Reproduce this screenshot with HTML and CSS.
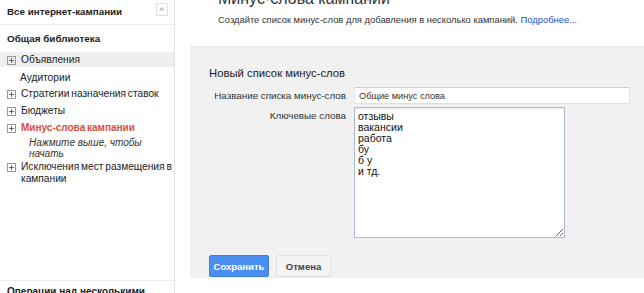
FILE: index.html
```html
<!DOCTYPE html>
<html lang="ru">
<head>
    <meta charset="utf-8">
    <title>Минус-слова кампании</title>
    <link rel="stylesheet" href="styles.css">
</head>
<body>
    <div class="sidebar">
        <div class="sideTop">
            <span class="sideTitle">Все интернет-кампании</span>
            <span class="collapse">&laquo;</span>
        </div>
        <div class="libTitle">Общая библиотека</div>
        <ul class="libList">
            <li class="selected"><span class="plus"></span>Объявления</li>
            <li class="noPlus">Аудитории</li>
            <li><span class="plus"></span>Стратегии назначения ставок</li>
            <li><span class="plus"></span>Бюджеты</li>
            <li class="active"><span class="plus"></span>Минус-слова кампании</li>
            <li class="hint">Нажмите выше, чтобы начать</li>
            <li><span class="plus"></span>Исключения мест размещения в кампании</li>
        </ul>
        <div class="sideBottom">Операции над несколькими</div>
    </div>
    <div class="main">
        <h2 class="pageTitle">Минус-слова кампании</h2>
        <p class="intro">Создайте список минус-слов для добавления в несколько кампаний. <a href="#">Подробнее...</a></p>
        <div class="panel">
            <h3 class="panelTitle">Новый список минус-слов</h3>
            <div class="formRow">
                <label>Название списка минус-слов</label>
                <input type="text" class="nameInput" value="Общие минус слова">
            </div>
            <div class="formRow">
                <label>Ключевые слова</label>
                <textarea class="words">отзывы
вакансии
работа
бу
б у
и тд.</textarea>
            </div>
            <div class="buttons">
                <button class="saveButton">Сохранить</button>
                <button class="cancelButton">Отмена</button>
            </div>
        </div>
    </div>
</body>
</html>
```

FILE: styles.css
```css
body{
    margin: 0;
    padding: 0;
    font-family: "Liberation Sans", Arial, Helvetica, sans-serif;
    font-size: 10px;
    color: #222;
    display: flex;
    height: 293px;
    overflow: hidden;
    background-color: white;
}
.sidebar{
    width: 174px;
    flex-shrink: 0;
    border-right: 1px solid #e3e3e3;
    display: flex;
    flex-direction: column;
}
.sideTop{
    display: flex;
    justify-content: space-between;
    align-items: center;
    height: 25px;
    padding: 0 6px 0 7px;
    border-bottom: 1px solid #ececec;
    box-sizing: border-box;
}
.sideTitle{
    font-weight: bold;
    font-size: 9.8px;
    margin-top: -1px;
}
.collapse{
    width: 10px;
    height: 11px;
    border: 1px solid #e0e0e0;
    color: #999;
    font-size: 9px;
    line-height: 10px;
    text-align: center;
    margin-top: -6px;
}
.libTitle{
    font-weight: bold;
    font-size: 9.9px;
    padding: 8px 7px 0 7px;
}
.libList{
    list-style: none;
    margin: 8px 0 0 0;
    padding: 0;
}
.libList li{
    display: flex;
    align-items: flex-start;
    padding: 2px 0 1px 7px;
    line-height: 12px;
    font-size: 10.2px;
    word-spacing: -1px;
    margin-bottom: 2px;
}
.libList li.selected{
    background-color: #efefef;
}
.libList li.noPlus{
    padding-left: 20px;
    padding-top: 3px;
    padding-bottom: 0;
}
.libList li.active{
    color: #dd4b39;
    font-weight: bold;
    font-size: 10px;
    margin-bottom: 0;
}
.libList li.hint{
    font-style: italic;
    padding: 2px 30px 0 29px;
    line-height: 11px;
    color: #333;
    font-size: 10px;
    word-spacing: 0;
    margin-bottom: 0;
}
.plus{
    flex-shrink: 0;
    position: relative;
    width: 7px;
    height: 7px;
    border: 1px solid #999;
    margin: 2px 5px 0 0;
}
.plus::before, .plus::after{
    content: "";
    position: absolute;
    background-color: #666;
}
.plus::before{
    left: 1px;
    top: 3px;
    width: 5px;
    height: 1px;
}
.plus::after{
    left: 3px;
    top: 1px;
    width: 1px;
    height: 5px;
}
.sideBottom{
    margin-top: auto;
    border-top: 1px solid #ececec;
    padding: 5px 7px 0 7px;
    font-weight: bold;
    font-size: 10px;
    height: 12px;
    margin-bottom: -5px;
}
.main{
    flex: 1;
    padding-left: 15px;
    min-width: 0;
}
.pageTitle{
    font-size: 16px;
    font-weight: normal;
    margin: -10px 0 0 28px;
    color: #333;
}
.intro{
    margin: 6px 0 0 28px;
    font-size: 9.4px;
    color: #333;
}
.intro a{
    color: #1155cc;
    text-decoration: none;
}
.panel{
    margin-top: 21px;
    background-color: #f1f1f1;
    border-top: 1px solid #e6e6e6;
    padding: 20px 0 14px 19px;
    height: 232px;
    box-sizing: border-box;
}
.panelTitle{
    font-size: 11.3px;
    font-weight: normal;
    color: #222;
    margin: 0 0 8px 0;
}
.formRow{
    display: flex;
    align-items: flex-start;
    margin-bottom: 3px;
}
.formRow label{
    width: 137px;
    white-space: nowrap;
    text-align: right;
    padding-right: 8px;
    font-size: 9.8px;
    color: #333;
    padding-top: 3px;
}
.nameInput{
    width: 276px;
    height: 17px;
    box-sizing: border-box;
    border: 1px solid #e0e0e0;
    border-top-color: #cfcfcf;
    font-family: "Liberation Sans", Arial, sans-serif;
    font-size: 9.2px;
    padding: 0 4px;
    color: #333;
    margin: 0;
}
.words{
    width: 211px;
    height: 131px;
    box-sizing: border-box;
    border: 1px solid #a8bad6;
    box-shadow: inset 0 1px 2px rgba(0, 0, 0, 0.08);
    font-family: "Liberation Sans", Arial, sans-serif;
    font-size: 10.5px;
    line-height: 11px;
    padding: 3px 3px;
    color: #111;
    margin: 0;
    resize: both;
}
.buttons{
    display: flex;
    gap: 7px;
    margin-top: 17px;
}
.saveButton, .cancelButton{
    height: 22px;
    border-radius: 2px;
    font-family: "Liberation Sans", Arial, sans-serif;
    font-size: 9.5px;
    font-weight: bold;
    padding: 0;
}
.saveButton{
    width: 60px;
    background-color: #4a8ef2;
    border: 1px solid #3f7ee0;
    color: white;
}
.cancelButton{
    width: 55px;
    background-color: #f4f4f4;
    border: 1px solid #e0e0e0;
    color: #444;
}
```
